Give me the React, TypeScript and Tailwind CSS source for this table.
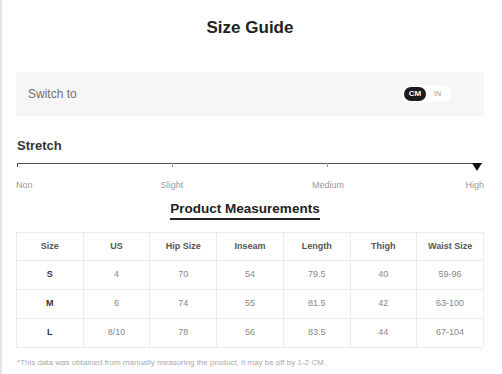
const rows = [
  ['S', '4', '70', '54', '79.5', '40', '59-96'],
  ['M', '6', '74', '55', '81.5', '42', '63-100'],
  ['L', '8/10', '78', '56', '83.5', '44', '67-104'],
];

const headers = ['Size', 'US', 'Hip Size', 'Inseam', 'Length', 'Thigh', 'Waist Size'];

function StretchScale() {
  return (
    <div className="mt-[9px]">
      <svg width="468" height="10" viewBox="0 0 468 10" className="block">
        <line x1="1" y1="1.5" x2="466" y2="1.5" stroke="#555" strokeWidth="1" />
        <line x1="1.5" y1="1" x2="1.5" y2="5" stroke="#555" strokeWidth="1" />
        <line x1="156.5" y1="1" x2="156.5" y2="5" stroke="#999" strokeWidth="1" />
        <line x1="311.5" y1="1" x2="311.5" y2="5" stroke="#999" strokeWidth="1" />
        <polygon points="456,1 466,1 461,9" fill="#111" />
      </svg>
      <div className="mt-[8px] flex justify-between text-[9px] leading-[10px] text-[#9a9a9a]">
        <div className="flex w-0 justify-start">
          <span className="whitespace-nowrap">Non</span>
        </div>
        <div className="flex w-0 justify-center">
          <span className="whitespace-nowrap">Slight</span>
        </div>
        <div className="flex w-0 justify-center">
          <span className="whitespace-nowrap">Medium</span>
        </div>
        <div className="flex w-0 justify-end">
          <span className="whitespace-nowrap">High</span>
        </div>
      </div>
    </div>
  );
}

export default function App() {
  return (
    <div className="h-[374px] w-[502px] overflow-hidden border-l-2 border-[#e4e4e4] bg-white pl-[14px] pr-[18px] font-['Liberation_Sans',Arial,sans-serif]">
      <h1 className="pt-[18px] text-center text-[17px] font-bold leading-[20px] text-[#222]">Size Guide</h1>

      <div className="mt-[34px] flex h-[44px] items-center justify-between bg-[#f6f6f6] pl-[12px] pr-[33px]">
        <span className="text-[12px] text-[#707070]">Switch to</span>
        <div className="flex h-[16px] w-[50px] items-center rounded-full bg-white pl-[3px]">
          <span className="flex h-[14px] w-[22px] items-center justify-center rounded-full bg-[#1c1c1c] text-[8px] font-bold text-white">
            CM
          </span>
          <span className="ml-[8px] text-[7px] text-[#999]">IN</span>
        </div>
      </div>

      <h2 className="mt-[22px] pl-px text-[13px] font-bold leading-[15px] text-[#333]">Stretch</h2>
      <StretchScale />

      <div className="mr-[10px] mt-[11px] flex justify-center">
        <h3 className="border-b-2 border-[#222] pb-[1px] text-[13.5px] font-bold leading-[16px] text-[#222]">
          Product Measurements
        </h3>
      </div>

      <table className="mt-[12px] w-[468px] table-fixed border-collapse text-center text-[9px]">
        <thead>
          <tr className="h-[28px]">
            {headers.map((h) => (
              <th key={h} className="border border-[#ececec] font-bold text-[#555]">
                {h}
              </th>
            ))}
          </tr>
        </thead>
        <tbody>
          {rows.map((r) => (
            <tr key={r[0]} className="h-[29px]">
              {r.map((c, i) => (
                <td
                  key={i}
                  className={
                    i === 0
                      ? 'border border-[#ececec] font-bold text-[#333]'
                      : 'border border-[#ececec] text-[#888]'
                  }
                >
                  {c}
                </td>
              ))}
            </tr>
          ))}
        </tbody>
      </table>

      <p className="mt-[10px] pl-px text-[8px] leading-[10px] text-[#aaa]">
        *This data was obtained from manually measuring the product, it may be off by 1-2 CM.
      </p>
    </div>
  );
}
